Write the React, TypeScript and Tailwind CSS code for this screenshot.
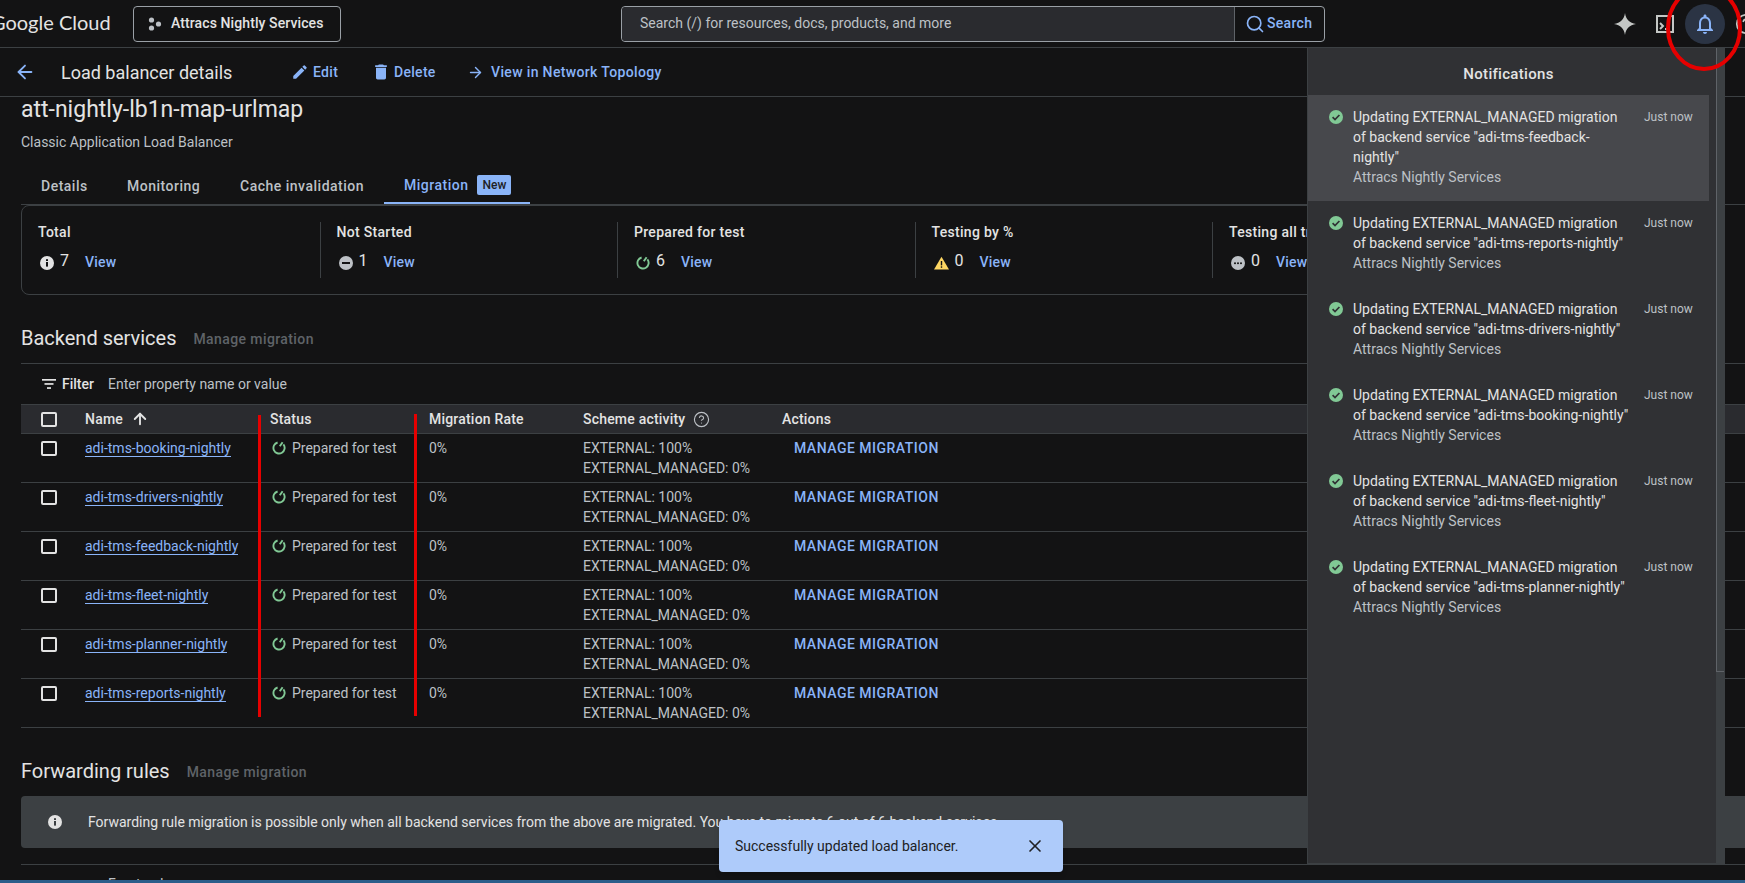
import React from 'react';
import { ArrowLeft, ArrowRight, ArrowUp, CircleHelp, Search, X } from 'lucide-react';

const backends = ['booking', 'drivers', 'feedback', 'fleet', 'planner', 'reports'];
const notifications = ['feedback', 'reports', 'drivers', 'booking', 'fleet', 'planner'];

const InfoIcon = ({ size = 14, dark = '#131314' }: { size?: number; dark?: string }) => (
  <svg width={size} height={size} viewBox="0 0 14 14" className="shrink-0">
    <circle cx="7" cy="7" r="7" fill="#e3e3e3" />
    <rect x="6" y="6" width="2" height="4.6" fill={dark} />
    <rect x="6" y="3.2" width="2" height="1.8" fill={dark} />
  </svg>
);

const MinusIcon = () => (
  <svg width="14" height="14" viewBox="0 0 14 14" className="shrink-0">
    <circle cx="7" cy="7" r="7" fill="#bdc1c6" />
    <rect x="3" y="6" width="8" height="2" fill="#131314" />
  </svg>
);

const ProgressIcon = () => (
  <svg width="14" height="14" viewBox="0 0 14 14" fill="none" className="shrink-0">
    <path d="M5.6 1.5A5.6 5.6 0 1 0 11.4 3.4" stroke="#81c995" strokeWidth="1.9" />
    <path d="M10.6 1.2 7.800 5.300" stroke="#81c995" strokeWidth="1.9" />
  </svg>
);

const WarnIcon = () => (
  <svg width="15" height="14" viewBox="0 0 15 14" className="shrink-0">
    <path d="M7.5.8 15 13.6H0z" fill="#fdd663" />
    <rect x="6.8" y="5" width="1.4" height="4.4" fill="#131314" />
    <rect x="6.8" y="10.3" width="1.4" height="1.5" fill="#131314" />
  </svg>
);

const MoreIcon = () => (
  <svg width="14" height="14" viewBox="0 0 14 14" className="shrink-0">
    <circle cx="7" cy="7" r="7" fill="#bdc1c6" />
    <circle cx="4" cy="7.2" r="1" fill="#131314" />
    <circle cx="7" cy="7.2" r="1" fill="#131314" />
    <circle cx="10" cy="7.2" r="1" fill="#131314" />
  </svg>
);

const CheckIcon = () => (
  <svg width="14" height="14" viewBox="0 0 14 14" fill="none" className="mt-[3px] shrink-0">
    <circle cx="7" cy="7" r="7" fill="#81c995" />
    <path d="M3.6 7.2 6 9.6l4.4-4.6" stroke="#303134" strokeWidth="1.7" />
  </svg>
);

const Checkbox = () => <div className="h-[15px] w-[16px] rounded-[2px] border-2 border-[#e3e3e3]" />;

const Stat = ({ label, count, icon, first }: { label: string; count: number; icon: React.ReactNode; first?: boolean }) => (
  <div className={`h-[56px] w-[297.5px] shrink-0 pl-[16px] ${first ? '' : 'border-l border-[#3c4043]'}`}>
    <div className="text-[14px] font-medium leading-[20px] tracking-[0.3px] text-[#e3e3e3]">{label}</div>
    <div className="mt-[10px] flex items-center pl-[2px]">
      {icon}
      <span className="-mt-[3px] ml-[6px] text-[16px] leading-[24px] text-[#e3e3e3]">{count}</span>
      <span className="ml-[16px] text-[14px] font-medium tracking-[0.25px] text-[#8ab4f8]">View</span>
    </div>
  </div>
);

const SectionTitle = ({ title, className }: { title: string; className: string }) => (
  <div className={`flex h-[28px] items-center ${className}`}>
    <span className="text-[20px] leading-[28px] text-[#e3e3e3]">{title}</span>
    <span className="ml-[17px] mt-[2px] text-[14px] font-medium tracking-[0.4px] text-[#5f6368]">Manage migration</span>
  </div>
);

export default function App() {
  return (
    <div className="relative flex h-screen w-full flex-col overflow-hidden bg-[#131314] font-['Roboto',sans-serif] text-[14px] text-[#e3e3e3]">
      {/* Top bar */}
      <header className="flex h-[48px] shrink-0 items-center border-b border-[#3c4043]">
        <span className="-mt-[3px] ml-[-9px] w-[142px] shrink-0 font-['Lato',sans-serif] text-[20px] text-[#e3e3e3]">Google Cloud</span>
        <div className="flex h-[36px] w-[208px] shrink-0 items-center rounded-[4px] border border-[#9aa0a6] pl-[14px]">
          <svg width="14" height="14" viewBox="0 0 14 14" fill="#bdc1c6">
            <circle cx="3.5" cy="3" r="2.6" />
            <circle cx="10.5" cy="7" r="2.6" />
            <circle cx="3.5" cy="11" r="2.6" />
          </svg>
          <span className="ml-[9px] text-[14px] font-medium tracking-[0.1px]">Attracs Nightly Services</span>
        </div>
        <div className="ml-[280px] flex h-[36px] w-[704px] shrink-0 rounded-[4px] border border-[#9aa0a6]">
          <div className="flex w-[613px] items-center rounded-l-[4px] border-r border-[#5f6368] bg-[#2a2b2f] pl-[18px] text-[#bdc1c6]">
            Search (/) for resources, docs, products, and more
          </div>
          <div className="flex flex-1 items-center pl-[10px] text-[#8ab4f8]">
            <Search size={20} strokeWidth={2} />
            <span className="ml-[2px] font-medium tracking-[0.3px]">Search</span>
          </div>
        </div>
        <svg width="24" height="24" viewBox="0 0 24 24" fill="#c4c7c5" className="ml-[288px] shrink-0">
          <path d="M12 1c.8 6.400 4.600 10.200 11 11-6.400.8-10.200 4.600-11 11-.8-6.400-4.600-10.200-11-11 6.400-.8 10.200-4.600 11-11z" />
        </svg>
        <svg width="20" height="20" viewBox="0 0 20 20" fill="none" stroke="#c4c7c5" strokeWidth="2" className="ml-[18px] shrink-0">
          <rect x="2" y="2" width="16" height="16" />
          <path d="m5 9 3 3-3 3" />
          <path d="M10 15h3" />
        </svg>
        <div className="ml-[10px] flex h-[40px] w-[40px] shrink-0 items-center justify-center rounded-full bg-[#2b3444]">
          <svg width="24" height="24" viewBox="0 0 24 24" fill="#8ab4f8">
            <path d="M12 22c1.100 0 2-.9 2-2h-4c0 1.100.9 2 2 2zm6-6v-5c0-3.070-1.630-5.640-4.500-6.320V4c0-.83-.67-1.500-1.500-1.500s-1.500.67-1.500 1.500v.68C7.640 5.360 6 7.920 6 11v5l-2 2v1h16v-1l-2-2zm-2 1H8v-6c0-2.480 1.510-4.500 4-4.500s4 2.020 4 4.500v6z" />
          </svg>
        </div>
        <CircleHelp size={22} strokeWidth={2} className="ml-[10px] shrink-0 text-[#c4c7c5]" />
      </header>

      {/* Page toolbar */}
      <div className="flex h-[49px] shrink-0 items-center border-b border-[#3c4043] text-[#8ab4f8]">
        <ArrowLeft size={22} strokeWidth={2} className="ml-[14px]" />
        <span className="ml-[25px] w-[230px] text-[18px] text-[#e3e3e3]">Load balancer details</span>
        <svg width="18" height="18" viewBox="0 0 24 24" fill="#8ab4f8" className="mr-[4px]">
          <path d="M3 17.250V21h3.750L17.810 9.940l-3.750-3.750L3 17.250zM20.710 7.040a1 1 0 0 0 0-1.410l-2.340-2.340a1 1 0 0 0-1.410 0l-1.830 1.830 3.750 3.750 1.830-1.830z" />
        </svg>
        <span className="w-[58px] font-medium tracking-[0.3px]">Edit</span>
        <svg width="20" height="20" viewBox="0 0 24 24" fill="#8ab4f8" className="mr-[3px]">
          <path d="M6 19c0 1.100.9 2 2 2h8c1.100 0 2-.9 2-2V7H6v12zM19 4h-3.500l-1-1h-5l-1 1H5v2h14V4z" />
        </svg>
        <span className="w-[73px] font-medium tracking-[0.3px]">Delete</span>
        <ArrowRight size={17} strokeWidth={2} className="mr-[7px]" />
        <span className="font-medium tracking-[0.35px]">View in Network Topology</span>
      </div>

      {/* Page body */}
      <main className="min-h-0 flex-1 overflow-hidden pl-[21px]">
        <h1 className="h-[28px] text-[23px] leading-[26px] text-[#e3e3e3]">att-nightly-lb1n-map-urlmap</h1>
        <p className="mt-[7px] leading-[20px] text-[#bdc1c6]">Classic Application Load Balancer</p>

        <div className="mt-[16px] flex h-[37px] border-b border-[#3c4043] font-medium tracking-[0.5px] text-[#bdc1c6]">
          <span className="flex h-[36px] w-[106px] items-center pl-[20px]">Details</span>
          <span className="flex h-[36px] w-[113px] items-center">Monitoring</span>
          <span className="flex h-[36px] w-[144px] items-center">Cache invalidation</span>
          <span className="flex h-[36px] w-[146px] items-center border-b-2 border-[#8ab4f8] pl-[20px] text-[#8ab4f8]">
            Migration
            <span className="ml-[9px] flex h-[20px] w-[34px] items-center justify-center rounded-[2px] bg-[#8ab4f8] text-[12px] tracking-normal text-[#202124]">New</span>
          </span>
        </div>

        <div className="flex h-[90px] w-[1690px] items-center rounded-lg border border-[#3c4043]">
          <Stat first label="Total" count={7} icon={<InfoIcon />} />
          <Stat label="Not Started" count={1} icon={<MinusIcon />} />
          <Stat label="Prepared for test" count={6} icon={<ProgressIcon />} />
          <Stat label="Testing by %" count={0} icon={<WarnIcon />} />
          <Stat label="Testing all traffic" count={0} icon={<MoreIcon />} />
        </div>

        <SectionTitle title="Backend services" className="mt-[29px]" />
        <div className="mt-[11px] flex h-[41px] items-center border-t border-[#3c4043] pl-[21px]">
          <svg width="14" height="10" viewBox="0 0 14 10" fill="#e3e3e3">
            <rect width="14" height="1.700" />
            <rect x="2.500" y="4.100" width="9" height="1.700" />
            <rect x="5" y="8.200" width="4" height="1.700" />
          </svg>
          <span className="ml-[6px] font-medium">Filter</span>
          <span className="ml-[14px] text-[#bdc1c6]">Enter property name or value</span>
        </div>

        <div className="grid h-[30px] grid-cols-[64px_185px_159px_154px_199px_1fr] items-center border-y border-[#3c4043] bg-[#2a2b2f] font-medium tracking-[0.2px]">
          <div className="pl-[20px]">
            <Checkbox />
          </div>
          <div className="flex items-center">
            Name
            <ArrowUp size={18} strokeWidth={2.500} className="ml-[8px]" />
          </div>
          <div>Status</div>
          <div>Migration Rate</div>
          <div className="flex items-center">
            Scheme activity
            <CircleHelp size={17} strokeWidth={1.600} className="ml-[8px] text-[#bdc1c6]" />
          </div>
          <div>Actions</div>
        </div>

        {backends.map((name) => (
          <div key={name} className="grid h-[49px] grid-cols-[64px_185px_159px_154px_199px_1fr] border-b border-[#3c4043] pt-[4px] leading-[20px] text-[#bdc1c6]">
            <div className="pl-[20px] pt-[3px]">
              <Checkbox />
            </div>
            <div>
              <span className="border-b border-[#8ab4f8] text-[#8ab4f8]">adi-tms-{name}-nightly</span>
            </div>
            <div className="flex items-start pl-[2px] pt-[3px]">
              <ProgressIcon />
              <span className="-mt-[3px] ml-[6px]">Prepared for test</span>
            </div>
            <div>0%</div>
            <div>
              <div>EXTERNAL: 100%</div>
              <div>EXTERNAL_MANAGED: 0%</div>
            </div>
            <div className="pl-[12px] font-medium tracking-[0.5px] text-[#8ab4f8]">MANAGE MIGRATION</div>
          </div>
        ))}

        <SectionTitle title="Forwarding rules" className="mt-[29px]" />
        <div className="mt-[11px] flex h-[52px] items-center rounded-l-[4px] bg-[#3c4043] pl-[27px]">
          <InfoIcon dark="#3c4043" />
          <span className="ml-[26px] text-[#e3e3e3]">
            Forwarding rule migration is possible only when all backend services from the above are migrated. You have to migrate 6 out of 6 backend services.
          </span>
        </div>
        <div className="mt-[16px] border-t border-[#3c4043] pl-[87px] pt-[9px] text-[#bdc1c6]">Frontend</div>
      </main>
      <div className="h-[3px] shrink-0 bg-[#2b5d8a]" />

      {/* Red annotations on the screenshot */}
      <div className="absolute left-[258px] top-[415px] h-[302px] w-[3px] bg-[#e60000]" />
      <div className="absolute left-[414px] top-[414px] h-[302px] w-[3px] bg-[#e60000]" />

      {/* Notifications panel */}
      <aside className="absolute left-[1307px] top-[47px] flex h-[817px] w-[418px] border border-[#3c4043] bg-[#303134]">
        <div className="w-[401px]">
          <div className="flex h-[47px] items-center justify-center pt-[6px] text-[15px] font-medium tracking-[0.3px]">Notifications</div>
          {notifications.map((name, i) => (
            <div key={name} className={`flex pb-[14px] pl-[21px] pt-[12px] ${i === 0 ? 'bg-[#47484c]' : ''}`}>
              <CheckIcon />
              <div className="ml-[10px] w-[291px] pr-[11px] leading-[20px]">
                <div className="text-[#e3e3e3]">
                  Updating EXTERNAL_MANAGED migration of backend service "adi-tms-{name}-nightly"
                </div>
                <div className="text-[#bdc1c6]">Attracs Nightly Services</div>
              </div>
              <span className="text-[12px] leading-[20px] text-[#bdc1c6]">Just now</span>
            </div>
          ))}
        </div>
        <div className="ml-[7px] flex-1 bg-[#3c4043]">
          <div className="h-[624px] border-b border-l border-[#5f6368]" />
        </div>
      </aside>

      {/* Red circle around the bell */}
      <svg width="90" height="80" viewBox="0 0 90 80" fill="none" className="absolute left-[1660px] top-0">
        <ellipse cx="44" cy="28" rx="36" ry="41" stroke="#e60000" strokeWidth="4" />
      </svg>

      {/* Snackbar */}
      <div className="absolute left-[719px] top-[820px] flex h-[52px] w-[344px] items-center justify-between rounded-[4px] bg-[#aecbfa] pl-[16px] pr-[18px] text-[#202124] shadow-md">
        <span>Successfully updated load balancer.</span>
        <X size={20} strokeWidth={2} />
      </div>
    </div>
  );
}
